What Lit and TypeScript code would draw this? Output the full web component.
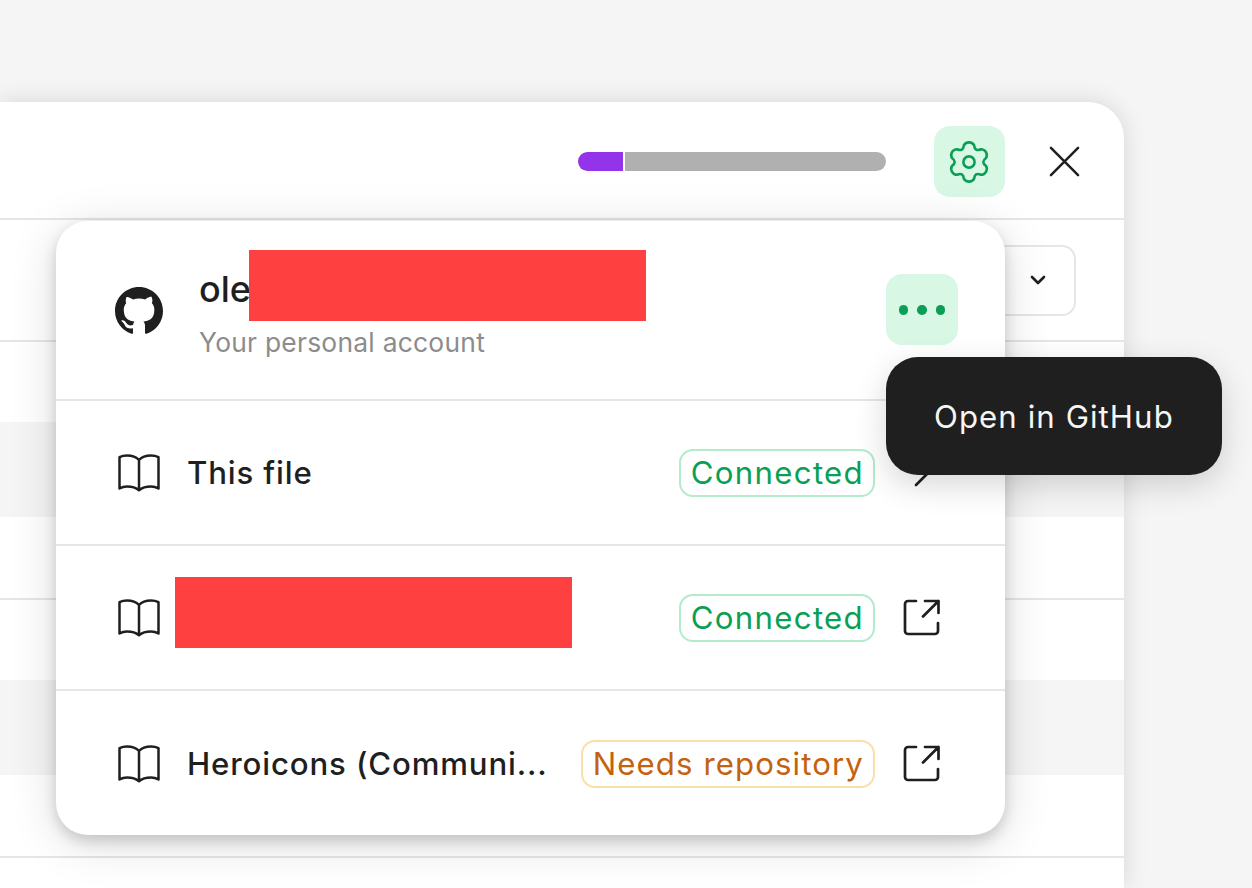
import { LitElement, html, css, svg } from 'lit';
import { customElement } from 'lit/decorators.js';

// six rounded lobes around the centre, same outline as the plugin's settings icon
function gearPath(cx: number, cy: number) {
  const at = (deg: number, r: number) => {
    const a = (deg * Math.PI) / 180;
    return `${(cx + r * Math.cos(a)).toFixed(2)} ${(cy + r * Math.sin(a)).toFixed(2)}`;
  };
  let d = `M${at(-107, 17.5)}`;
  for (let i = 0; i < 6; i++) {
    const a = -90 + i * 60;
    d += `A6 6 0 0 1 ${at(a + 17, 17.5)}`;
    d += `Q${at(a + 30, 11.55)} ${at(a + 43, 17.5)}`;
  }
  return d + 'Z';
}

const gear = html`<svg class="gear" viewBox="0 0 48 48" fill="none" stroke="currentColor" stroke-width="2.6" stroke-linejoin="round">
  <path d=${gearPath(24, 24)}></path>
  <circle cx="24" cy="24" r="5.6"></circle>
</svg>`;

const book = html`<svg class="book" viewBox="0 0 44 38" fill="none" stroke="currentColor" stroke-width="2.5" stroke-linejoin="round" stroke-linecap="round">
  <path d="M22 6C19 2.8 15 1.6 10 1.6 7.5 1.6 5 2 2.5 3.2V34.5C5 33 7.5 32.4 10 32.4 15 32.4 19 33.6 22 36.2 25 33.6 29 32.4 34 32.4 36.5 32.4 39 33 41.5 34.5V3.2C39 2 36.5 1.6 34 1.6 29 1.6 25 2.8 22 6ZM22 6V36"/>
</svg>`;

const external = html`<svg class="action" viewBox="0 0 37 37" fill="none" stroke="currentColor" stroke-width="2.7" stroke-linecap="round" stroke-linejoin="round">
  <path d="M13 2H5A3 3 0 0 0 2 5V32A3 3 0 0 0 5 35H32A3 3 0 0 0 35 32V24M22 2H35.5V14M35.5 2 20 17.5"/>
</svg>`;

const chevronRight = html`<svg class="action" viewBox="0 0 37 37" fill="none" stroke="currentColor" stroke-width="2.7" stroke-linecap="round" stroke-linejoin="round">
  <path d="M13 5 26 18 13 31"/>
</svg>`;

const github = html`<svg class="github" viewBox="0 0 16 16" fill="currentColor">
  ${svg`<path d="M8 0c4.42 0 8 3.58 8 8a8.013 8.013 0 0 1-5.45 7.59c-.4.08-.55-.17-.55-.38 0-.27.01-1.13.01-2.2 0-.75-.25-1.23-.54-1.48 1.78-.2 3.65-.88 3.65-3.95 0-.88-.31-1.59-.82-2.15.08-.2.36-1.02-.08-2.12 0 0-.67-.22-2.2.82-.64-.18-1.32-.27-2-.27-.68 0-1.36.09-2 .27-1.53-1.03-2.2-.82-2.2-.82-.44 1.1-.16 1.92-.08 2.12-.51.56-.82 1.28-.82 2.15 0 3.06 1.86 3.75 3.64 3.95-.23.2-.44.55-.51 1.07-.46.21-1.61.55-2.33-.66-.15-.24-.6-.83-1.23-.82-.67.01-.27.38.01.53.34.19.73.9.82 1.13.16.45.68 1.31 2.69.94 0 .67.01 1.3.01 1.49 0 .21-.15.45-.55.38A7.995 7.995 0 0 1 0 8c0-4.42 3.58-8 8-8Z"/>`}
</svg>`;

@customElement('app-root')
export class AppRoot extends LitElement {
  static styles = css`
    :host {
      display: block;
      height: 888px;
      overflow: hidden;
      box-sizing: border-box;
      padding: 102px 128px 0 0;
      background: #f5f5f5;
      font-family: Inter, 'Liberation Sans', sans-serif;
      color: #1f1f1f;
    }

    .panel {
      position: relative;
      height: 100%;
      background: #fff;
      border-radius: 0 36px 0 0;
      box-shadow: 0 0 24px rgba(0, 0, 0, 0.13);
    }

    .panel__head {
      display: flex;
      align-items: center;
      justify-content: flex-end;
      box-sizing: border-box;
      height: 118px;
      padding: 3px 44px 0 0;
      gap: 44px;
      border-bottom: 2px solid #e6e6e6;
    }

    .progress {
      display: flex;
      gap: 2px;
      width: 308px;
      height: 19px;
      margin-right: 4px;
    }

    .progress__used {
      width: 45px;
      background: #9333ea;
      border-radius: 9.5px 0 0 9.5px;
    }

    .progress__rest {
      flex: 1;
      background: #b0b0b0;
      border-radius: 0 9.5px 9.5px 0;
    }

    .icon-btn {
      display: flex;
      align-items: center;
      justify-content: center;
      width: 71px;
      height: 71px;
      border-radius: 16px;
      background: #d9f7e5;
      color: #0b9f55;
    }

    .gear {
      width: 48px;
      height: 48px;
      margin-left: -1px;
    }

    .close {
      width: 31px;
      height: 31px;
    }

    .bg-row {
      box-sizing: border-box;
      border-bottom: 2px solid #e6e6e6;
      display: flex;
      align-items: center;
      justify-content: flex-end;
    }

    .bg-row--select {
      height: 122px;
      padding-right: 48px;
    }

    .bg-row--band {
      height: 258px;
      padding-bottom: 2px;
    }

    .band {
      width: 100%;
      height: 95px;
      background: #f5f5f5;
    }

    .select {
      display: flex;
      align-items: center;
      justify-content: flex-end;
      box-sizing: border-box;
      width: 300px;
      height: 71px;
      padding-right: 27px;
      border: 2.5px solid #e6e6e6;
      border-radius: 14px;
    }

    .select svg {
      width: 18px;
      height: 12px;
    }

    .popover {
      position: absolute;
      top: 119px;
      left: 56px;
      width: 949px;
      background: #fff;
      border-radius: 32px;
      box-shadow: 0 6px 14px rgba(0, 0, 0, 0.16), 0 8px 48px rgba(0, 0, 0, 0.14);
    }

    .account {
      display: flex;
      align-items: center;
      height: 178px;
      padding: 0 47px 0 59px;
      border-bottom: 2px solid #e6e6e6;
    }

    .github {
      width: 48px;
      height: 48px;
      margin-right: 36px;
      flex: none;
      position: relative;
      top: 1px;
    }

    .account__text {
      flex: 1;
      position: relative;
      top: 2.5px;
    }

    .account__name {
      position: relative;
      font-size: 36px;
      font-weight: 500;
      line-height: 44px;
    }

    .account__sub {
      margin-top: 15px;
      font-size: 26.4px;
      line-height: 32px;
      letter-spacing: 0.25px;
      color: #8c8c8c;
    }

    .redact {
      background: #ff4040;
      width: 397px;
      height: 71px;
    }

    .account__name .redact {
      position: absolute;
      left: 50px;
      top: -17px;
    }

    .dots-wrap {
      position: relative;
      top: -1px;
    }

    .dots {
      width: 72px;
      gap: 9px;
    }

    .dots i {
      width: 9.5px;
      height: 9.5px;
      border-radius: 50%;
      background: currentColor;
      position: relative;
      top: 1px;
    }

    .tooltip {
      position: absolute;
      top: 83px;
      left: 0;
      padding: 2px 48px 0;
      box-sizing: border-box;
      height: 118px;
      display: flex;
      align-items: center;
      border-radius: 32px;
      background: #1f1f1f;
      color: #f5f5f5;
      font-size: 31.2px;
      letter-spacing: 1.07px;
      white-space: nowrap;
      box-shadow: 0 10px 32px rgba(0, 0, 0, 0.16);
      z-index: 2;
    }

    .repo {
      display: flex;
      align-items: center;
      height: 145px;
      box-sizing: border-box;
      padding: 0 65px 0 61px;
      border-bottom: 2px solid #e6e6e6;
    }

    .repo:last-child {
      height: 144px;
      padding-top: 1px;
      border-bottom: 0;
    }

    .book {
      width: 44px;
      height: 38px;
      flex: none;
      margin-right: 26px;
    }

    .repo__name {
      flex: 1;
      font-size: 31.2px;
      font-weight: 550;
      letter-spacing: 0.85px;
      white-space: nowrap;
    }

    .repo .redact {
      flex: none;
      margin: 0 auto 10px -12px;
    }

    .badge {
      flex: none;
      box-sizing: border-box;
      height: 48px;
      padding: 0 9px 0 9.5px;
      display: flex;
      align-items: center;
      border: 2.5px solid;
      border-radius: 14px;
      font-size: 31.2px;
      letter-spacing: 1.1px;
    }

    .badge--ok {
      color: #0b9f55;
      border-color: #b3ebcc;
      letter-spacing: 1.3px;
    }

    .badge--warn {
      color: #c4620e;
      border-color: #fbdfa8;
    }

    .action {
      width: 37px;
      height: 37px;
      flex: none;
      margin-left: 28px;
    }
  `;

  private repoRow(name: string | null, badge: string, warn: boolean, action = external) {
    return html`
      <div class="repo">
        ${book}
        ${name ? html`<span class="repo__name">${name}</span>` : html`<div class="redact"></div>`}
        <span class="badge ${warn ? 'badge--warn' : 'badge--ok'}">${badge}</span>
        ${action}
      </div>
    `;
  }

  render() {
    return html`
      <div class="panel">
        <div class="panel__head">
          <div class="progress">
            <div class="progress__used"></div>
            <div class="progress__rest"></div>
          </div>
          <div class="icon-btn">${gear}</div>
          <svg class="close" viewBox="0 0 32 32" fill="none" stroke="currentColor" stroke-width="2.6" stroke-linecap="round">
            <path d="M2 2 30 30M30 2 2 30"/>
          </svg>
        </div>

        <div class="bg-row bg-row--select">
          <div class="select">
            <svg viewBox="0 0 18 12" fill="none" stroke="currentColor" stroke-width="2.6" stroke-linecap="round" stroke-linejoin="round">
              <path d="M3 3 9 9 15 3"/>
            </svg>
          </div>
        </div>
        <div class="bg-row bg-row--band"><div class="band"></div></div>
        <div class="bg-row bg-row--band"><div class="band"></div></div>

        <div class="popover">
          <div class="account">
            ${github}
            <div class="account__text">
              <div class="account__name">ole<div class="redact"></div></div>
              <div class="account__sub">Your personal account</div>
            </div>
            <div class="dots-wrap">
              <div class="icon-btn dots"><i></i><i></i><i></i></div>
              <div class="tooltip">Open in GitHub</div>
            </div>
          </div>
          ${this.repoRow('This file', 'Connected', false, chevronRight)}
          ${this.repoRow(null, 'Connected', false)}
          ${this.repoRow('Heroicons (Communi...', 'Needs repository', true)}
        </div>
      </div>
    `;
  }
}
